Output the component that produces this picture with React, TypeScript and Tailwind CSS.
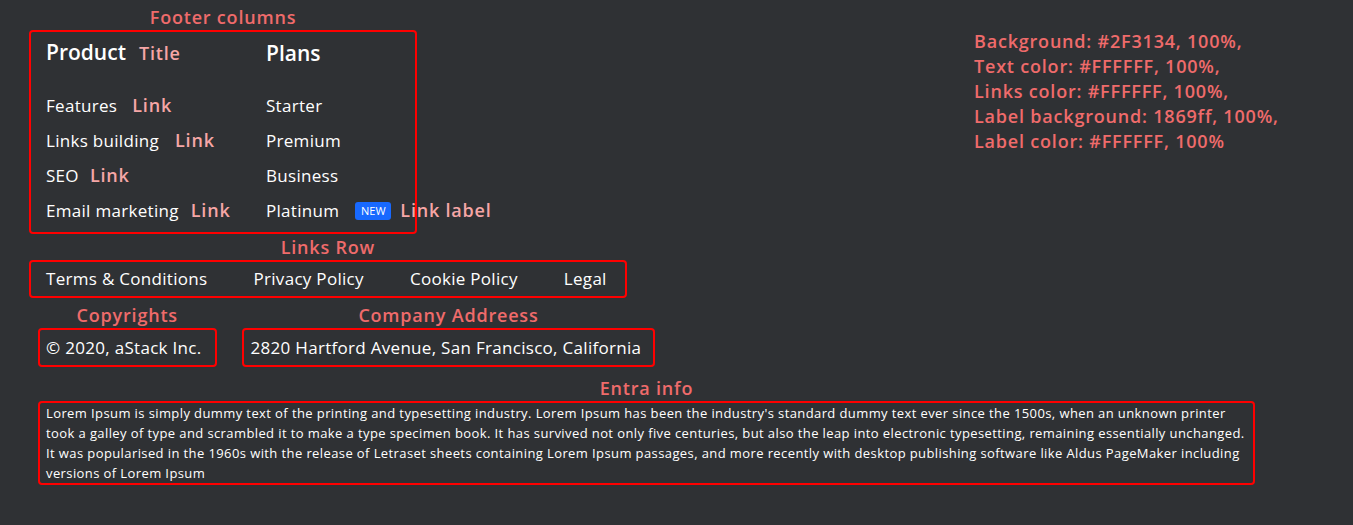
import { ReactNode } from "react";

const font = { fontFamily: "'Open Sans', 'Noto Sans', sans-serif" };

function Note({ children }: { children: ReactNode }) {
  return <span className="font-semibold text-[#ef6b6b] text-[18px] tracking-[0.8px] whitespace-nowrap">{children}</span>;
}

function Tag({ children, className = "" }: { children: ReactNode; className?: string }) {
  return <span className={"font-semibold text-[#f6a6a6] text-[18px] tracking-[0.8px] whitespace-nowrap " + className}>{children}</span>;
}

function Section({ label, children, className = "" }: { label: string; children: ReactNode; className?: string }) {
  return (
    <div className={"flex flex-col items-center w-fit " + className}>
      <div className="h-[25px] leading-[25px]">
        <Note>{label}</Note>
      </div>
      {children}
    </div>
  );
}

const products = [
  { name: "Features", gap: "ml-[15px]" },
  { name: "Links building", gap: "ml-[16px]" },
  { name: "SEO", gap: "ml-[11px]" },
  { name: "Email marketing", gap: "ml-[12px]" },
];

const plans = ["Starter", "Premium", "Business", "Platinum"];

const lorem = [
  "Lorem Ipsum is simply dummy text of the printing and typesetting industry. Lorem Ipsum has been the industry's standard dummy text ever since the 1500s, when an unknown printer",
  "took a galley of type and scrambled it to make a type specimen book. It has survived not only five centuries, but also the leap into electronic typesetting, remaining essentially unchanged.",
  "It was popularised in the 1960s with the release of Letraset sheets containing Lorem Ipsum passages, and more recently with desktop publishing software like Aldus PageMaker including",
  "versions of Lorem Ipsum",
];

export default function App() {
  return (
    <div className="min-h-screen bg-[#2F3134] text-white pl-[29px] pt-[5px]" style={font}>
      <div className="flex">
        <Section label="Footer columns">
          <div className="w-[388px] h-[204px] border-2 border-[#ff0000] rounded-[4px] pl-[15px] pt-[7px]">
            <div className="flex">
              <div className="w-[220px] shrink-0">
                <div className="h-[28px] flex items-center">
                  <span className="text-[21px] font-semibold">Product</span>
                  <Tag className="ml-[13px]">Title</Tag>
                </div>
                <div className="mt-[21px]">
                  {products.map((p) => (
                    <div key={p.name} className="h-[35px] flex items-center whitespace-nowrap">
                      <a className="text-[17px] tracking-[0.3px]">{p.name}</a>
                      <Tag className={p.gap}>Link</Tag>
                    </div>
                  ))}
                </div>
              </div>
              <div className="shrink-0">
                <div className="h-[28px] leading-[28px] text-[21px] font-semibold">Plans</div>
                <div className="mt-[21px]">
                  {plans.map((p) => (
                    <div key={p} className="h-[35px] flex items-center whitespace-nowrap">
                      <a className="text-[17px] tracking-[0.3px]">{p}</a>
                      {p === "Platinum" && (
                        <>
                          <span className="ml-[16px] w-[36px] text-center bg-[#1869ff] text-white text-[11px] h-[18px] leading-[18px] rounded-[3px]">
                            NEW
                          </span>
                          <Tag className="ml-[9px]">Link label</Tag>
                        </>
                      )}
                    </div>
                  ))}
                </div>
              </div>
            </div>
          </div>
        </Section>
        <div className="ml-[557px] mt-[24px] flex flex-col leading-[25px]">
          <Note>Background: #2F3134, 100%,</Note>
          <Note>Text color: #FFFFFF, 100%,</Note>
          <Note>Links color: #FFFFFF, 100%,</Note>
          <Note>Label background: 1869ff, 100%,</Note>
          <Note>Label color: #FFFFFF, 100%</Note>
        </div>
      </div>

      <Section label="Links Row" className="mt-[1px]">
        <div className="h-[38px] border-2 border-[#ff0000] rounded-[4px] pl-[15px] pr-[18px] flex items-center gap-[46px] text-[17px] tracking-[0.3px] whitespace-nowrap">
          <a>Terms &amp; Conditions</a>
          <a>Privacy Policy</a>
          <a>Cookie Policy</a>
          <a>Legal</a>
        </div>
      </Section>

      <div className="flex ml-[9px] mt-[5px] gap-[25px]">
        <Section label="Copyrights">
          <div className="h-[39px] border-2 border-[#ff0000] rounded-[4px] pl-[6px] pr-[13px] flex items-center text-[17px] tracking-[0.3px] whitespace-nowrap">
            © 2020, aStack Inc.
          </div>
        </Section>
        <Section label="Company Addreess">
          <div className="h-[39px] border-2 border-[#ff0000] rounded-[4px] pl-[7px] pr-[12px] flex items-center text-[17px] tracking-[0.3px] whitespace-nowrap">
            2820 Hartford Avenue, San Francisco, California
          </div>
        </Section>
      </div>

      <Section label="Entra info" className="ml-[9px] mt-[9px]">
        <div className="w-[1217px] border-2 border-[#ff0000] rounded-[4px] px-[6px] text-[13px] tracking-[0.4px] leading-[20px] whitespace-nowrap">
          {lorem.map((l) => (
            <div key={l}>{l}</div>
          ))}
        </div>
      </Section>
    </div>
  );
}
